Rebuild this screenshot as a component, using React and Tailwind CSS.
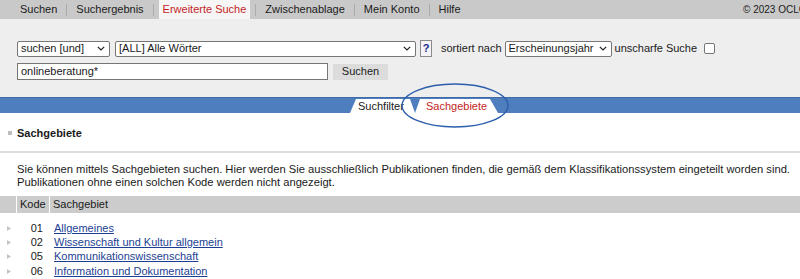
const navItems = ["Suchen", "Suchergebnis", "Erweiterte Suche", "Zwischenablage", "Mein Konto", "Hilfe"];

const rows = [
  { code: "01", label: "Allgemeines" },
  { code: "02", label: "Wissenschaft und Kultur allgemein" },
  { code: "05", label: "Kommunikationswissenschaft" },
  { code: "06", label: "Information und Dokumentation" },
];

const Chevron = () => (
  <svg width="8" height="5" viewBox="0 0 8 5" className="shrink-0">
    <polyline points="0.8,0.8 4,4 7.2,0.8" fill="none" stroke="#222" strokeWidth="1.2" />
  </svg>
);

const FakeSelect = ({ label, className }) => (
  <div
    className={`flex h-[16px] items-center justify-between rounded-[2px] border border-[#767676] bg-white pl-[3px] pr-[4px] ${className}`}
  >
    <span className="whitespace-nowrap">{label}</span>
    <Chevron />
  </div>
);

const App = () => {
  const active = "Erweiterte Suche";

  return (
    <div className="relative w-[800px] overflow-hidden bg-white text-[11px] leading-[13px] text-[#1a1a1a] [font-family:'Liberation_Sans',Arial,sans-serif]">
      {/* top navigation */}
      <div className="flex h-[19px] items-center bg-[#c9c9c9] pl-[16px]">
        {navItems.map((item, i) => (
          <div key={item} className="flex h-full items-center">
            {i > 0 && <div className="mx-[5px] h-[12px] w-px bg-[#ababab]" />}
            <span
              className={`flex h-full items-center px-[4px] ${
                item === active ? "bg-[#f6f6f6] text-[#c41e1e]" : "text-[#1a1a1a]"
              }`}
            >
              {item}
            </span>
          </div>
        ))}
        <span className="ml-auto mr-[-6px] whitespace-nowrap text-[10px]">© 2023 OCLC</span>
      </div>

      {/* search form */}
      <div className="h-[78px] bg-[#eeeeee] pl-[17px] pt-[21px]">
        <div className="flex items-center">
          <FakeSelect label="suchen [und]" className="w-[93px]" />
          <FakeSelect label="[ALL] Alle Wörter" className="ml-[5px] w-[301px]" />
          <div className="ml-[4px] flex h-[17px] w-[12px] items-center justify-center border border-[#8a8a8a] bg-[#f3f3f8] text-[11px] font-bold text-[#1b2a8c]">
            ?
          </div>
          <span className="ml-[9px]">sortiert nach</span>
          <FakeSelect label="Erscheinungsjahr" className="ml-[3px] w-[107px]" />
          <span className="ml-[3px]">unscharfe Suche</span>
          <div className="ml-[7px] h-[11px] w-[11px] rounded-[2px] border border-[#767676] bg-white" />
        </div>
        <div className="mt-[6px] flex items-center">
          <div className="flex h-[17px] w-[311px] items-center border border-[#767676] bg-white pl-[3px]">
            onlineberatung*
          </div>
          <div className="ml-[5px] flex h-[16px] w-[55px] items-center justify-center bg-[#dcdcdc]">Suchen</div>
        </div>
      </div>

      {/* blue tab bar */}
      <div className="flex h-[16px] items-end border-t border-[#3f6aa6] bg-[#4f7ebf] pl-[350px]">
        <div className="flex h-[14px] w-[65px] items-center bg-white pl-[8px] [clip-path:polygon(6px_0,60px_0,100%_100%,0_100%)]">
          Suchfilter
        </div>
        <div className="flex h-[14px] w-[83px] items-center bg-white pl-[11px] text-[#c41e1e] [clip-path:polygon(5px_0,75px_0,100%_100%,0_100%)]">
          Sachgebiete
        </div>
      </div>

      {/* highlight ellipse */}
      <svg className="pointer-events-none absolute left-0 top-0" width="800" height="140">
        <ellipse cx="455" cy="105.5" rx="53" ry="21.5" fill="none" stroke="#2c5eab" strokeWidth="1.4" />
      </svg>

      {/* section heading */}
      <div className="flex h-[38px] items-center pl-[8px] pt-[2px]">
        <div className="h-[4px] w-[4px] bg-[#bdbdbd]" />
        <span className="ml-[5px] font-bold">Sachgebiete</span>
      </div>
      <div className="h-[2px] bg-[#dedede]" />

      <p className="pl-[17px] pt-[10px] text-[11.2px]">
        Sie können mittels Sachgebieten suchen. Hier werden Sie ausschließlich Publikationen finden, die gemäß dem
        Klassifikationssystem eingeteilt worden sind.
        <br />
        Publikationen ohne einen solchen Kode werden nicht angezeigt.
      </p>

      {/* table */}
      <div className="mt-[7px] flex h-[17px] items-center bg-[#cccccc]">
        <div className="h-full w-[17px] border-r border-white" />
        <div className="flex h-full w-[33px] items-center border-r border-white pl-[3px]">Kode</div>
        <div className="pl-[3px]">Sachgebiet</div>
      </div>
      <div className="pt-[8px]">
        {rows.map((row) => (
          <div key={row.code} className="flex h-[14.4px] items-center">
            <div className="flex w-[17px] items-center pl-[7px]">
              <svg width="4" height="5" viewBox="0 0 4 5">
                <polygon points="0,0 4,2.5 0,5" fill="#c4c4c4" />
              </svg>
            </div>
            <div className="w-[33px] pr-[7px] text-right">{row.code}</div>
            <a href="#" className="pl-[4px] text-[#1d3f93] underline">
              {row.label}
            </a>
          </div>
        ))}
      </div>
    </div>
  );
};

export default App;
